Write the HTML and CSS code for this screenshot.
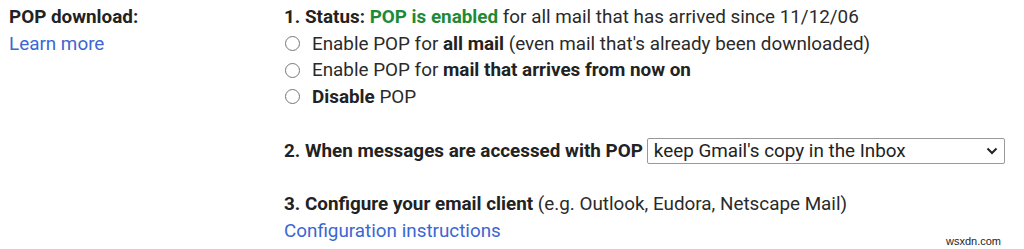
FILE: index.html
```html
<!DOCTYPE html>
<html>
<head>
<meta charset="utf-8">
<link rel="stylesheet" href="styles.css">
</head>
<body>
<div class="setting">
  <div class="label-col">
    <div class="title">POP download:</div>
    <a class="link" href="#">Learn more</a>
  </div>
  <div class="content">
    <div class="line"><b>1. Status: </b><b class="green">POP is enabled</b> for all mail that has arrived since 11/12/06</div>
    <label class="radio-row"><span class="radio"></span><span>Enable POP for <b>all mail</b> (even mail that's already been downloaded)</span></label>
    <label class="radio-row"><span class="radio"></span><span>Enable POP for <b>mail that arrives from now on</b></span></label>
    <label class="radio-row"><span class="radio"></span><span><b>Disable</b> POP</span></label>

    <div class="line step2"><b>2. When messages are accessed with POP</b>
      <div class="select"><span>keep Gmail's copy in the Inbox</span>
        <svg class="chev" width="12" height="8" viewBox="0 0 12 8"><path d="M1.5 1.5 L6 6 L10.5 1.5" fill="none" stroke="#222" stroke-width="2"/></svg>
      </div>
    </div>

    <div class="line step3"><b>3. Configure your email client</b> (e.g. Outlook, Eudora, Netscape Mail)</div>
    <a class="link" href="#">Configuration instructions</a>
  </div>
</div>
<div class="watermark">wsxdn.com</div>
</body>
</html>
```
FILE: styles.css
```css
html, body {
  margin: 0;
  padding: 0;
  background: #fff;
}
body {
  font-family: Roboto, "Liberation Sans", Arial, sans-serif;
  font-size: 18.85px;
  color: #2a2a2a;
  line-height: 26.5px;
  width: 1024px;
  height: 249px;
  overflow: hidden;
  position: relative;
}
b { font-weight: 700; color: #222; }
.setting {
  display: grid;
  grid-template-columns: 275px 1fr;
  padding: 4px 0 0 9px;
}
.label-col {
  display: flex;
  flex-direction: column;
}
.title { font-weight: 700; color: #222; }
.link {
  color: #3b66d3;
  text-decoration: none;
  display: block;
}
.content {
  display: flex;
  flex-direction: column;
  align-items: flex-start;
}
.green { color: #1e8a36; }
.radio-row {
  display: flex;
  align-items: center;
  gap: 12px;
  padding-left: 1px;
}
.radio {
  border: 1px solid #777;
  border-radius: 50%;
  box-sizing: border-box;
  width: 15px;
  height: 15px;
}
.step2 {
  display: flex;
  align-items: center;
  gap: 4px;
  margin-top: 28px;
}
.select {
  width: 358px;
  height: 26px;
  box-sizing: border-box;
  border: 1px solid #999;
  border-radius: 2px;
  display: flex;
  align-items: center;
  justify-content: space-between;
  padding: 0 6px 0 6px;
  color: #222;
}
.step3 { margin-top: 26.5px; }
.watermark {
  position: absolute;
  right: 23px;
  bottom: 1px;
  font-family: "Liberation Sans", Arial, sans-serif;
  font-size: 11px;
  line-height: 14px;
  color: #222;
}
```
